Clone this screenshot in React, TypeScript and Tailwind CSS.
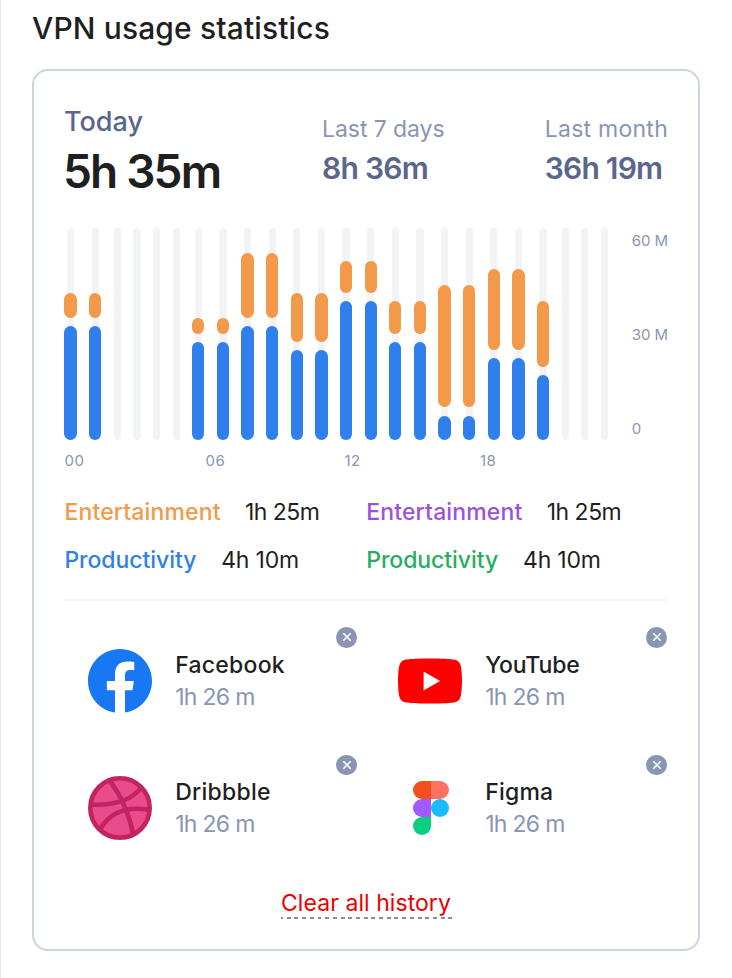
import type { ReactNode } from "react";

type Bar = { productivity: number; entertainment: number };

const pair = (productivity: number, entertainment: number): Bar[] => [
  { productivity, entertainment },
  { productivity, entertainment },
];

const UNITS = 26;

const hours: Bar[] = [
  ...pair(14, 3),
  ...pair(0, 0),
  ...pair(0, 0),
  ...pair(12, 2),
  ...pair(14, 8),
  ...pair(11, 6),
  ...pair(17, 4),
  ...pair(12, 4),
  ...pair(3, 15),
  ...pair(10, 10),
  { productivity: 8, entertainment: 8 },
  { productivity: 0, entertainment: 0 },
  ...pair(0, 0),
];

function FacebookLogo() {
  return (
    <svg viewBox="0 0.073 24 24" className="size-16">
      <path
        fill="#1877F2"
        d="M24 12.073c0-6.627-5.373-12-12-12s-12 5.373-12 12c0 5.99 4.388 10.954 10.125 11.854v-8.385H7.078v-3.47h3.047V9.43c0-3.007 1.792-4.669 4.533-4.669 1.312 0 2.686.235 2.686.235v2.953H15.83c-1.491 0-1.956.925-1.956 1.874v2.25h3.328l-.532 3.47h-2.796v8.385C19.612 23.027 24 18.062 24 12.073z"
      />
    </svg>
  );
}

function YouTubeLogo() {
  return (
    <svg viewBox="0 0 24 24" className="size-16">
      <path
        fill="#FF0000"
        d="M23.498 6.186a3.016 3.016 0 0 0-2.122-2.136C19.505 3.545 12 3.545 12 3.545s-7.505 0-9.377.505A3.017 3.017 0 0 0 .502 6.186C0 8.07 0 12 0 12s0 3.93.502 5.814a3.016 3.016 0 0 0 2.122 2.136c1.871.505 9.376.505 9.376.505s7.505 0 9.377-.505a3.015 3.015 0 0 0 2.122-2.136C24 15.93 24 12 24 12s0-3.93-.502-5.814z"
      />
      <path fill="#fff" d="M9.6 15.568V8.432L15.8 12z" />
    </svg>
  );
}

function DribbbleLogo() {
  return (
    <svg viewBox="0 0 64 64" className="size-16" fill="none" stroke="#C32361" strokeWidth="4.6">
      <circle cx="32" cy="32" r="29.7" fill="#EA4C89" />
      <path d="M21.2 4.2C31 17 40.5 34 45.2 58.5" />
      <path d="M3.5 28.6C20 29.2 43 26.5 54 10.5" />
      <path d="M12 53.5C22 36 38 30 61 33.8" />
    </svg>
  );
}

function FigmaLogo() {
  return (
    <svg viewBox="0 0 36 54" className="ml-0.5 h-[54px] w-9">
      <path fill="#F24E1E" d="M9 0h9v18H9A9 9 0 0 1 9 0z" />
      <path fill="#FF7262" d="M18 0h9a9 9 0 0 1 0 18h-9z" />
      <path fill="#A259FF" d="M9 18h9v18H9a9 9 0 0 1 0-18z" />
      <circle fill="#1ABCFE" cx="27" cy="27" r="9" />
      <path fill="#0ACF83" d="M9 36h9v9a9 9 0 1 1-9-9z" />
    </svg>
  );
}

function RemoveButton() {
  return (
    <button aria-label="Remove" className="absolute top-0 right-[17.3px] flex size-[20.4px] items-center justify-center rounded-full bg-[#8a94b5]">
      <svg viewBox="0 0 8 8" className="size-2 overflow-visible" stroke="#fff" strokeWidth="1.6">
        <path d="M.3.3l7.4 7.4M7.7.3L.3 7.7" />
      </svg>
    </button>
  );
}

function AppTile({ logo, name, tracking }: { logo: ReactNode; name: string; tracking: string }) {
  return (
    <div className="relative flex h-[127.3px] w-[310px] pt-[21.3px] pl-6">
      <div className="flex size-16 items-center justify-center">{logo}</div>
      <div className="flex flex-col gap-1 pt-0.5 pl-[23.2px] leading-7">
        <div className={"font-medium text-[#1f1f1f] " + tracking}>{name}</div>
        <div className="tracking-[-0.7px] text-[#8a94b5]">1h 26 m</div>
      </div>
      <RemoveButton />
    </div>
  );
}

function HourBar({ bar }: { bar: Bar }) {
  if (!bar.productivity) return <div className="w-[7.3px] rounded-full bg-[#f1f3f4]" />;
  return (
    <div className="relative flex w-[12.3px] flex-col justify-end gap-[8.15px]">
      <div className="absolute inset-y-0 left-[2.5px] w-[7.3px] rounded-full bg-[#f1f3f4]" />
      <div
        className="relative rounded-full bg-[#f2994a]"
        style={{ height: `${(bar.entertainment / UNITS) * 100}%` }}
      />
      <div
        className="relative rounded-full bg-[#2f80ed]"
        style={{ height: `${(bar.productivity / UNITS) * 100}%` }}
      />
    </div>
  );
}

function Legend({ top, bottom }: { top: string; bottom: string }) {
  return (
    <div className="flex w-[302px] flex-col gap-5 leading-7">
      <div className="flex">
        <span className={"w-[180.5px] font-medium tracking-[0.15px] " + top}>Entertainment</span>
        <span className="tracking-[-0.5px] text-[#1f1f1f]">1h 25m</span>
      </div>
      <div className="flex">
        <span className={"w-[156.8px] font-medium tracking-[-0.05px] " + bottom}>Productivity</span>
        <span className="tracking-[-0.2px] text-[#1f1f1f]">4h 10m</span>
      </div>
    </div>
  );
}

export default function App() {
  return (
    <div className="h-[978px] overflow-hidden border-l border-[#dfe8f3] bg-white pt-3 pl-[31px] font-['Inter',sans-serif] whitespace-nowrap">
      <h1 className="text-[30px] leading-8 font-medium tracking-[0.13px] text-[#1f1f1f]">VPN usage statistics</h1>

      <div className="mt-[25px] flex h-[882px] w-[668px] flex-col rounded-2xl border-2 border-[#c8d5e2] px-[30px] pt-[35px] text-[23px]">
        <div className="flex h-[90px]">
          <div className="w-[258.5px]">
            <div className="text-[27px] leading-8 font-medium text-[#5a668c]">Today</div>
            <div className="mt-[9px] -ml-px text-[46px] leading-12 font-semibold tracking-[-1.85px] text-[#1f1f1f]">5h 35m</div>
          </div>
          <div className="w-[223px] pt-[9px]">
            <div className="tracking-[-0.08px] leading-7 text-[#8a94b5]">Last 7 days</div>
            <div className="mt-[6.5px] text-[30px] leading-9 font-semibold tracking-[-0.75px] text-[#5a668c]">8h 36m</div>
          </div>
          <div className="pt-[9px]">
            <div className="leading-7 tracking-[0.25px] text-[#8a94b5]">Last month</div>
            <div className="mt-[6.5px] text-[30px] leading-9 font-semibold tracking-[-0.8px] text-[#5a668c]">36h 19m</div>
          </div>
        </div>

        <div className="mt-8 flex h-[212px]">
          <div className="ml-[0.4px] flex h-full w-[544.8px] justify-between">
            {hours.map((bar, i) => (
              <HourBar key={i} bar={bar} />
            ))}
          </div>
          <div className="ml-[23.8px] flex h-[210px] flex-col justify-between pt-1 text-[15px] leading-[18px] tracking-[-0.1px] text-[#8a94b5]">
            <span>60 M</span>
            <span>30 M</span>
            <span>0</span>
          </div>
        </div>

        <div className="mt-[10.5px] flex pl-[0.5px] text-[15px] leading-5 tracking-[0.5px] text-[#8a94b5]">
          <span className="w-[141px]">00</span>
          <span className="w-[139px]">06</span>
          <span className="w-[135.5px]">12</span>
          <span>18</span>
        </div>

        <div className="mt-[27px] ml-[0.4px] flex">
          <Legend top="text-[#f2994a]" bottom="text-[#2f80ed]" />
          <Legend top="text-[#9b51e0]" bottom="text-[#27ae60]" />
        </div>

        <div className="mt-[25.5px] h-0.5 w-[604px] shrink-0 bg-[#f1f3f4]" />

        <div className="mt-[26.3px] flex w-[620px] flex-wrap">
          <AppTile logo={<FacebookLogo />} name="Facebook" tracking="tracking-[0.25px]" />
          <AppTile logo={<YouTubeLogo />} name="YouTube" tracking="tracking-[-0.15px]" />
          <AppTile logo={<DribbbleLogo />} name="Dribbble" tracking="tracking-[0.25px]" />
          <AppTile logo={<FigmaLogo />} name="Figma" tracking="tracking-[0.2px]" />
        </div>

        <button className="mt-[7px] ml-[217px] w-[171px] text-left">
          <span className="block leading-7 tracking-[0.06px] text-[#eb0000]">Clear all history</span>
          <span className="block h-0.5 bg-[repeating-linear-gradient(90deg,#8a8d9e_0_2px,transparent_2px_5.7px,#8a8d9e_5.7px_7.7px)]" />
        </button>
      </div>
    </div>
  );
}
